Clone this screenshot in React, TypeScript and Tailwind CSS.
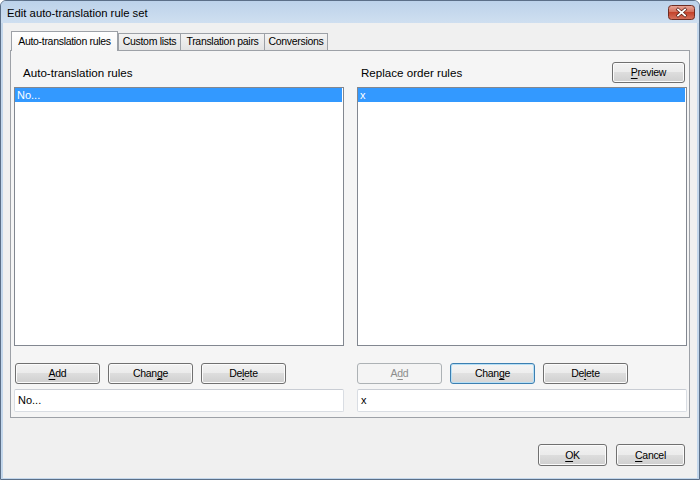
import type { ReactNode } from 'react';

const btnBase =
  'flex h-[21px] items-center justify-center rounded-[3px] border text-[10.5px] tracking-[-0.3px] leading-none';
const btnNormal =
  'border-[#707070] bg-[linear-gradient(#f2f2f2,#ebebeb_50%,#dddddd_50%,#cfcfcf)] shadow-[inset_0_0_0_1px_#fbfbfb] text-black';
const btnFocused =
  'border-[#3c7fb1] bg-[linear-gradient(#f4f4f4,#eeeeee_50%,#e1e1e1_50%,#d6d6d6)] shadow-[inset_0_0_0_1px_#b7dff5] text-black';
const btnDisabled = 'border-[#adb2b5] bg-[#f4f4f4] text-[#8d8d8d]';

function Button({
  children,
  className,
  variant = 'normal',
}: {
  children: ReactNode;
  className: string;
  variant?: 'normal' | 'focused' | 'disabled';
}) {
  const look = variant === 'focused' ? btnFocused : variant === 'disabled' ? btnDisabled : btnNormal;
  return <div className={`${btnBase} ${look} ${className}`}>{children}</div>;
}

function U({ children }: { children: ReactNode }) {
  return <span className="underline decoration-1 underline-offset-[2px]">{children}</span>;
}

function Column({
  label,
  labelPad,
  item,
  preview,
  rightSide,
}: {
  label: string;
  labelPad: string;
  item: string;
  preview?: boolean;
  rightSide?: boolean;
}) {
  return (
    <div className="flex w-[330px] flex-col">
      <div className="flex h-[21px] items-center justify-between">
        <span className={`${labelPad} text-[11.6px] text-black`}>{label}</span>
        {preview && (
          <Button className="mr-[2px] w-[73px]">
            <U>P</U>review
          </Button>
        )}
      </div>
      <div className="mt-[4px] h-[259px] border border-[#828790] bg-white">
        <div className="mr-[1px] flex h-[14px] items-center bg-[#3399ff] pl-[2px] text-[11px] text-white">
          {item}
        </div>
      </div>
      <div className={`mt-[17px] flex gap-[8px] ${rightSide ? '' : 'pl-[1px]'}`}>
        {rightSide ? (
          <Button className="w-[85px]" variant="disabled">
            A<U>d</U>d
          </Button>
        ) : (
          <Button className="w-[85px]">
            <U>A</U>dd
          </Button>
        )}
        <Button className="w-[85px]" variant={rightSide ? 'focused' : 'normal'}>
          Chan<U>g</U>e
        </Button>
        <Button className="w-[85px]">
          De<U>l</U>ete
        </Button>
      </div>
      <div className="mt-[5px] flex h-[23px] items-center rounded-[2px] border border-[#d9dde3] border-t-[#c9cdd4] bg-white pl-[3px] text-[11px] text-black">
        {item}
      </div>
    </div>
  );
}

export default function App() {
  return (
    <div className="flex h-[480px] w-[700px] flex-col overflow-hidden rounded-t-[6px] border border-[#5b6f88] bg-[#c3d7ec] font-['Liberation_Sans',Arial,sans-serif]">
      <div className="flex h-[22px] items-start justify-between bg-[linear-gradient(#bcd2ea,#cfdff0)] pl-[6px] pr-[4px]">
        <span className="mt-[4px] text-[11.3px] text-black">Edit auto-translation rule set</span>
        <svg width="27" height="15" viewBox="0 0 27 15" className="mt-[4px]">
          <defs>
            <linearGradient id="cl" x1="0" y1="0" x2="0" y2="1">
              <stop offset="0" stopColor="#e9a99b" />
              <stop offset="0.45" stopColor="#d4705c" />
              <stop offset="0.5" stopColor="#c4432c" />
              <stop offset="1" stopColor="#d6735f" />
            </linearGradient>
          </defs>
          <rect x="0.5" y="0.5" width="26" height="14" rx="3" fill="url(#cl)" stroke="#6e2c22" />
          <path d="M10 4.5 L17 10.5 M17 4.5 L10 10.5" stroke="#5a2018" strokeWidth="3.2" strokeLinecap="square" />
          <path d="M10 4.5 L17 10.5 M17 4.5 L10 10.5" stroke="#ffffff" strokeWidth="1.8" strokeLinecap="square" />
        </svg>
      </div>
      <div className="mb-[1px] ml-[2px] mr-[2px] flex flex-1 flex-col bg-[#f0f0f0]">
        <div className="px-[7px] pt-[8px]">
          <div className="flex h-[19px] items-end pl-[1px] text-[10.5px] tracking-[-0.3px] text-black">
            <div className="relative z-10 -mb-px flex h-[20px] w-[107px] items-center justify-center border border-b-0 border-[#9da1a7] bg-[linear-gradient(#ffffff,#f5f5f5)]">
              Auto-translation rules
            </div>
            <div className="flex h-[17px] w-[62px] items-center justify-center border-l border-t border-[#9da1a7] bg-[linear-gradient(#f3f3f3,#e3e3e3)]">
              Custom lists
            </div>
            <div className="flex h-[17px] w-[84px] items-center justify-center border-l border-t border-[#9da1a7] bg-[linear-gradient(#f3f3f3,#e3e3e3)]">
              Translation pairs
            </div>
            <div className="flex h-[17px] w-[64px] items-center justify-center border-l border-r border-t border-[#9da1a7] bg-[linear-gradient(#f3f3f3,#e3e3e3)]">
              Conversions
            </div>
          </div>
          <div className="flex h-[368px] gap-[13px] border border-[#9da1a7] bg-[#f5f5f5] pb-[5px] pl-[3px] pr-[2px] pt-[11px]">
            <Column label="Auto-translation rules" labelPad="pl-[9px]" item="No..." />
            <Column label="Replace order rules" labelPad="pl-[4px]" item="x" preview rightSide />
          </div>
        </div>
        <div className="mt-[26px] flex justify-end gap-[9px] pr-[12px]">
          <Button className="h-[22px] w-[69px]">
            <U>O</U>K
          </Button>
          <Button className="h-[22px] w-[69px]">
            <U>C</U>ancel
          </Button>
        </div>
      </div>
    </div>
  );
}
